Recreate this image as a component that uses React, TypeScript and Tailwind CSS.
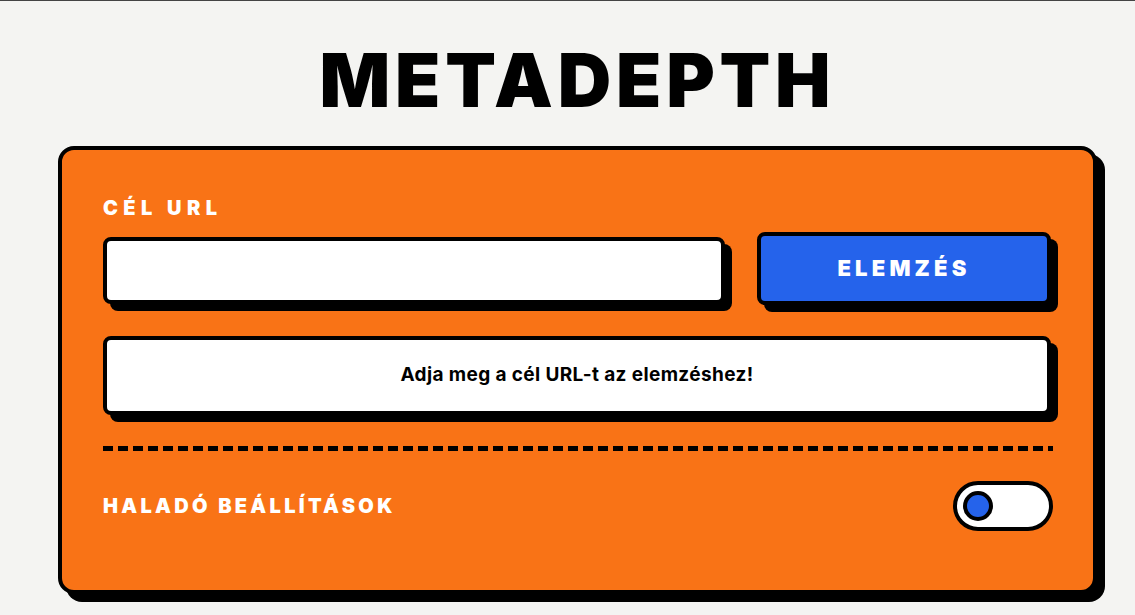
export default function App() {
  return (
    <div className="min-h-[615px] border-t border-[#444] bg-[#f4f4f2] font-['Inter','Liberation_Sans',sans-serif] text-black">
      <div className="ml-[58px] w-[1039px] pt-[42px] pb-10">
        {/* Title */}
        <h1 className="text-center text-[74px] font-black leading-none tracking-[0.065em]">
          METADEPTH
        </h1>

        {/* Card */}
        <div className="mt-[29px] rounded-2xl border-4 border-black bg-[#f97316] pt-[44px] pr-10 pl-[41px] pb-[59px] shadow-[8px_8px_0_#000]">
          <label className="block text-[20px] font-black leading-7 tracking-[0.27em] text-white">
            CÉL URL
          </label>

          <div className="mt-[10px] flex items-start gap-8">
            <input
              type="text"
              className="mt-[5px] h-[67px] flex-1 rounded-lg border-4 border-black bg-white px-4 text-lg outline-none shadow-[7px_7px_0_#000]"
            />
            <button className="mr-[2px] h-[73px] w-[294px] rounded-lg border-4 border-black bg-[#2563eb] text-[22px] font-black tracking-[0.19em] text-white shadow-[7px_7px_0_#000]">
              ELEMZÉS
            </button>
          </div>

          {/* Status message */}
          <div className="mt-[31px] mr-[2px] flex h-[79px] items-center justify-center rounded-lg border-4 border-black bg-white shadow-[7px_7px_0_#000]">
            <p className="text-[19px] font-bold tracking-[0.02em]">Adja meg a cél URL-t az elemzéshez!</p>
          </div>

          {/* Divider */}
          <div className="mt-[31px] h-[5px] bg-[repeating-linear-gradient(to_right,#000_0_10px,transparent_10px_15px)]" />

          {/* Advanced settings */}
          <div className="mt-[30px] flex items-center justify-between">
            <span className="text-[20px] font-black tracking-[0.165em] text-white">
              HALADÓ BEÁLLÍTÁSOK
            </span>
            <button className="flex h-[50px] w-[100px] items-center rounded-full border-4 border-black bg-white pl-[6px]">
              <span className="h-[30px] w-[30px] rounded-full border-4 border-black bg-[#2563eb]" />
            </button>
          </div>
        </div>
      </div>
    </div>
  );
}
